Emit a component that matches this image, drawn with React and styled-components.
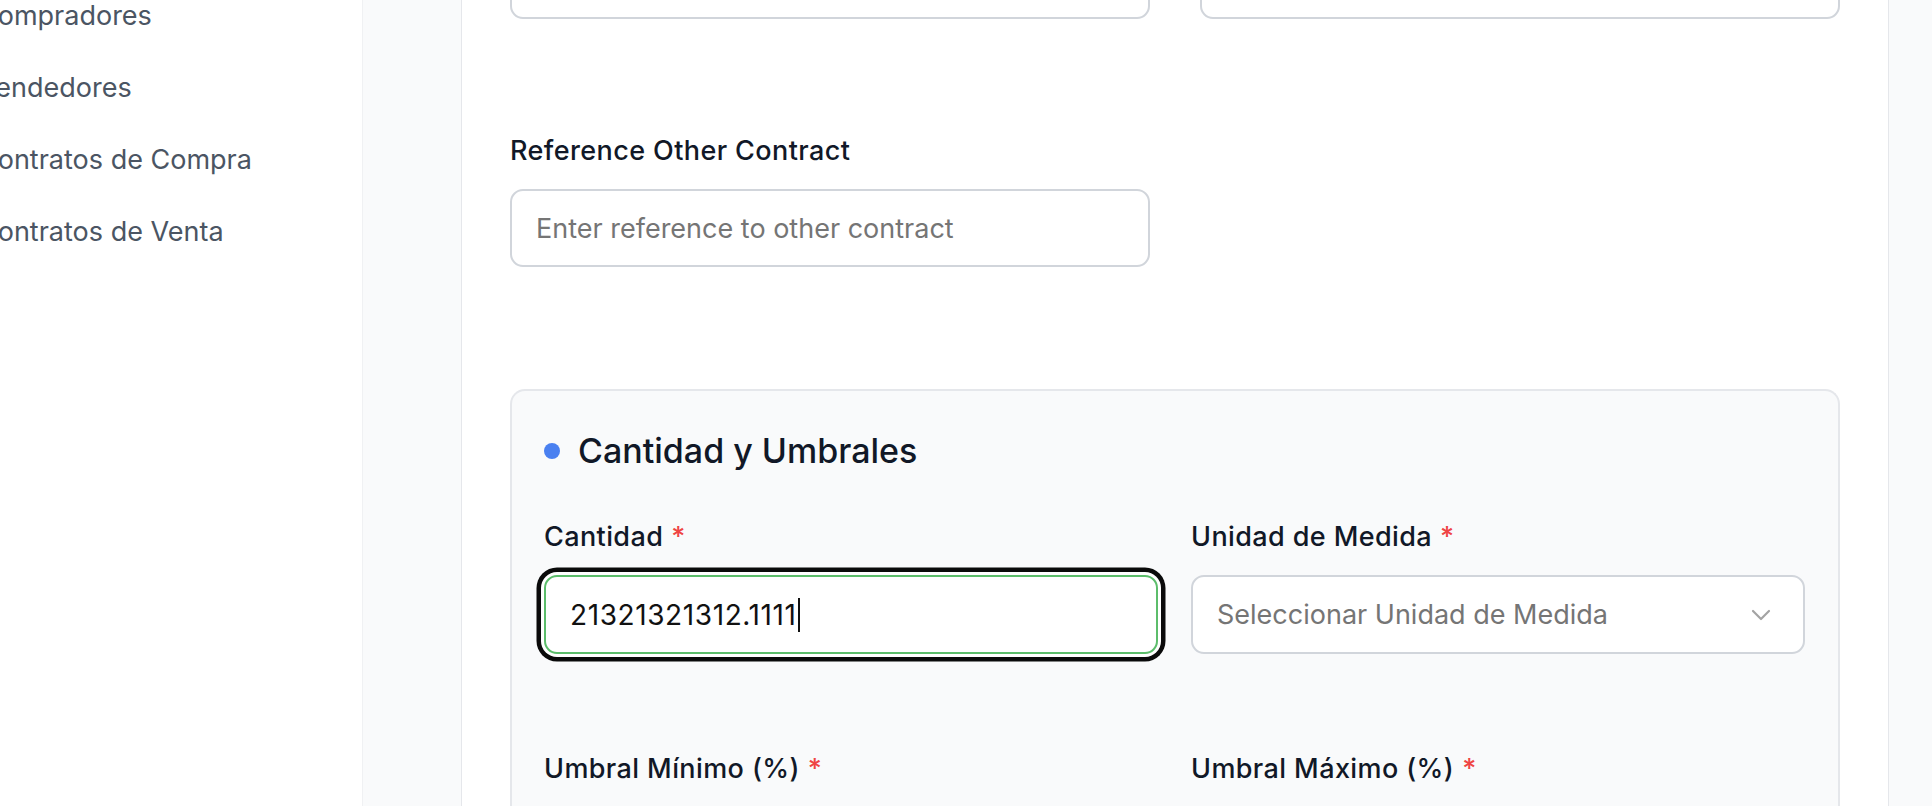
import styled, { createGlobalStyle } from "styled-components";

const GlobalStyle = createGlobalStyle`
  html, body {
    margin: 0;
    padding: 0;
    background: #f9fafb;
    font-family: Inter, "Noto Sans", "Liberation Sans", sans-serif;
    overflow: hidden;
  }
  * {
    box-sizing: border-box;
  }
`;

const Page = styled.div`
  display: flex;
  width: 1932px;
  height: 806px;
  overflow: hidden;
  background: #f9fafb;
`;

const Sidebar = styled.nav`
  width: 362px;
  flex-shrink: 0;
  background: #ffffff;
  display: flex;
  flex-direction: column;
  gap: 36px;
  margin-top: -2px;
  overflow: hidden;
`;

const NavItem = styled.a`
  display: block;
  margin-left: -22px;
  font-size: 27px;
  line-height: 36px;
  color: #4b5563;
  white-space: nowrap;
  text-decoration: none;
`;

const Gutter = styled.div`
  width: 100px;
  flex-shrink: 0;
  background: #f9fafb;
  border-left: 1px solid #f0f1f3;
  border-right: 1px solid #e5e7eb;
`;

const Main = styled.main`
  width: 1427px;
  flex-shrink: 0;
  background: #ffffff;
  border-right: 1px solid #e5e7eb;
  padding: 0 48px;
  display: flex;
  flex-direction: column;
`;

const Grid = styled.div`
  display: grid;
  grid-template-columns: 1fr 1fr;
  column-gap: ${(p) => p.$gap || 50}px;
  row-gap: ${(p) => p.$rowGap || 0}px;
  margin-top: ${(p) => p.$top || 0}px;
`;

const Field = styled.div`
  display: flex;
  flex-direction: column;
  gap: 20px;
`;

const Label = styled.label`
  font-size: 27px;
  line-height: 36px;
  font-weight: 500;
  letter-spacing: 0.4px;
  color: #111827;
  white-space: nowrap;
`;

const Required = styled.span`
  color: #ef4444;
  margin-left: 8px;
`;

const Input = styled.input`
  width: 100%;
  height: 78px;
  padding: 0 24px;
  border: 2px solid #d1d5db;
  border-radius: 13px;
  background: #ffffff;
  font-family: inherit;
  font-size: 27px;
  color: #111827;
  outline: none;

  &::placeholder {
    color: #757575;
  }
`;

const FocusedBox = styled.div`
  display: flex;
  align-items: center;
  height: 79px;
  padding: 0 24px;
  border: 2px solid #5cbd6b;
  border-radius: 13px;
  background: #ffffff;
  box-shadow: 0 0 0 3px #ffffff, 0 0 0 7.5px #0a0a0a;
  font-size: 28px;
  letter-spacing: 0.6px;
  color: #111111;
`;

const Caret = styled.span`
  display: inline-block;
  width: 2px;
  height: 34px;
  margin-left: 1px;
  background: #111111;
`;

const Select = styled.div`
  display: flex;
  align-items: center;
  justify-content: space-between;
  height: 79px;
  padding: 0 32px 0 24px;
  border: 2px solid #d1d5db;
  border-radius: 13px;
  background: #ffffff;
  font-size: 27px;
  color: #757575;
`;

const TopRow = styled(Grid)`
  margin-top: -59px;
`;

const Section = styled.section`
  margin-top: 122px;
  background: #f9fafb;
  border: 2px solid #e5e7eb;
  border-bottom: none;
  border-radius: 15px 15px 0 0;
  padding: 38px 33px 60px 32px;
`;

const SectionTitle = styled.h2`
  display: flex;
  align-items: center;
  gap: 18px;
  margin: 0;
  font-size: 34px;
  line-height: 44px;
  font-weight: 500;
  color: #111827;
`;

const Dot = styled.span`
  width: 16px;
  height: 16px;
  border-radius: 50%;
  background: #4a80f0;
  flex-shrink: 0;
`;

const Chevron = () => (
  <svg width="20" height="12" viewBox="0 0 20 12" fill="none">
    <path
      d="M2 2l8 8 8-8"
      stroke="#a3a3a3"
      strokeWidth="2.2"
      strokeLinecap="round"
      strokeLinejoin="round"
    />
  </svg>
);

export default function App() {
  return (
    <>
      <GlobalStyle />
      <Page>
        <Sidebar>
          <NavItem>Compradores</NavItem>
          <NavItem>Vendedores</NavItem>
          <NavItem>Contratos de Compra</NavItem>
          <NavItem>Contratos de Venta</NavItem>
        </Sidebar>
        <Gutter />
        <Main>
          <TopRow>
            <Input />
            <Input />
          </TopRow>

          <Grid $top={114}>
            <Field>
              <Label>Reference Other Contract</Label>
              <Input placeholder="Enter reference to other contract" />
            </Field>
          </Grid>

          <Section>
            <SectionTitle>
              <Dot />
              Cantidad y Umbrales
            </SectionTitle>
            <Grid $gap={33} $rowGap={97} $top={46}>
              <Field>
                <Label>
                  Cantidad<Required>*</Required>
                </Label>
                <FocusedBox>
                  21321321312.1111
                  <Caret />
                </FocusedBox>
              </Field>
              <Field>
                <Label>
                  Unidad de Medida<Required>*</Required>
                </Label>
                <Select>
                  Seleccionar Unidad de Medida
                  <Chevron />
                </Select>
              </Field>
              <Field>
                <Label>
                  Umbral Mínimo (%)<Required>*</Required>
                </Label>
              </Field>
              <Field>
                <Label>
                  Umbral Máximo (%)<Required>*</Required>
                </Label>
              </Field>
            </Grid>
          </Section>
        </Main>
      </Page>
    </>
  );
}
